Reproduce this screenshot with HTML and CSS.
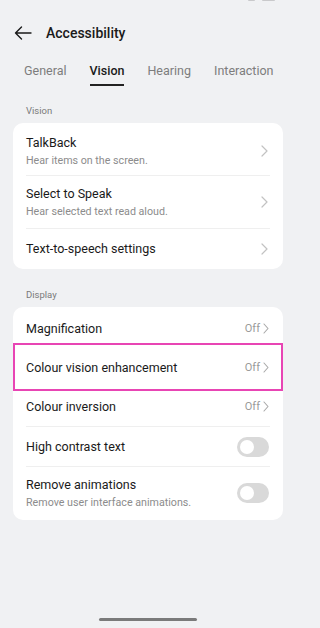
FILE: index.html
```html
<!DOCTYPE html>
<html>
<head>
<meta charset="utf-8">
<link rel="stylesheet" href="styles.css">
</head>
<body>
<div class="screen">
  <div class="status"><span class="s1"></span><span class="s2"></span></div>
  <div class="header">
    <svg class="back" width="18" height="14" viewBox="0 0 18 14"><path d="M17 7H1.5M7.5 1L1.5 7l6 6" fill="none" stroke="#1a1a1a" stroke-width="1.4" stroke-linecap="round" stroke-linejoin="round"/></svg>
    <span class="title">Accessibility</span>
  </div>
  <div class="tabs">
    <div class="tab">General</div>
    <div class="tab active">Vision</div>
    <div class="tab">Hearing</div>
    <div class="tab">Interaction</div>
  </div>

  <div class="section-label first">Vision</div>
  <div class="card">
    <div class="row tall first-row">
      <div class="text"><div class="name">TalkBack</div><div class="sub">Hear items on the screen.</div></div>
      <svg class="chev big" width="7" height="12" viewBox="0 0 7 12"><path d="M1 1l5 5-5 5" fill="none" stroke="#c2c2c2" stroke-width="1.2" stroke-linecap="round" stroke-linejoin="round"/></svg>
    </div>
    <div class="divider"></div>
    <div class="row tall">
      <div class="text"><div class="name">Select to Speak</div><div class="sub">Hear selected text read aloud.</div></div>
      <svg class="chev big" width="7" height="12" viewBox="0 0 7 12"><path d="M1 1l5 5-5 5" fill="none" stroke="#c2c2c2" stroke-width="1.2" stroke-linecap="round" stroke-linejoin="round"/></svg>
    </div>
    <div class="divider"></div>
    <div class="row short">
      <div class="text"><div class="name">Text-to-speech settings</div></div>
      <svg class="chev big" width="7" height="12" viewBox="0 0 7 12"><path d="M1 1l5 5-5 5" fill="none" stroke="#c2c2c2" stroke-width="1.2" stroke-linecap="round" stroke-linejoin="round"/></svg>
    </div>
  </div>

  <div class="section-label second">Display</div>
  <div class="card padded">
    <div class="row mid">
      <div class="text"><div class="name">Magnification</div></div>
      <div class="value">Off<svg class="chev" width="6" height="11" viewBox="0 0 6 11"><path d="M1 1l4 4.5L1 10" fill="none" stroke="#a8a8a8" stroke-width="1.1" stroke-linecap="round" stroke-linejoin="round"/></svg></div>
    </div>
    <div class="row mid highlight">
      <div class="text"><div class="name">Colour vision enhancement</div></div>
      <div class="value">Off<svg class="chev" width="6" height="11" viewBox="0 0 6 11"><path d="M1 1l4 4.5L1 10" fill="none" stroke="#a8a8a8" stroke-width="1.1" stroke-linecap="round" stroke-linejoin="round"/></svg></div>
    </div>
    <div class="row mid">
      <div class="text"><div class="name">Colour inversion</div></div>
      <div class="value">Off<svg class="chev" width="6" height="11" viewBox="0 0 6 11"><path d="M1 1l4 4.5L1 10" fill="none" stroke="#a8a8a8" stroke-width="1.1" stroke-linecap="round" stroke-linejoin="round"/></svg></div>
    </div>
    <div class="divider"></div>
    <div class="row mid">
      <div class="text"><div class="name">High contrast text</div></div>
      <div class="toggle"><span class="knob"></span></div>
    </div>
    <div class="divider"></div>
    <div class="row tall">
      <div class="text"><div class="name">Remove animations</div><div class="sub">Remove user interface animations.</div></div>
      <div class="toggle"><span class="knob"></span></div>
    </div>
  </div>

  <div class="spacer"></div>
  <div class="home"></div>
</div>
</body>
</html>
```

FILE: styles.css
```css
* { box-sizing: border-box; }
html, body { margin: 0; padding: 0; }
body {
  background: #f0f1f3;
  font-family: Roboto, "Noto Sans", "Liberation Sans", sans-serif;
  color: #1a1a1a;
  overflow: hidden;
}
.screen {
  width: 296px;
  height: 628px;
  display: flex;
  flex-direction: column;
  overflow: hidden;
}
.status {
  height: 2px;
  display: flex;
  justify-content: flex-end;
  gap: 7px;
  padding-right: 21px;
}
.status span { height: 1px; background: #c9c9cb; border-radius: 0 0 1px 1px; }
.status .s1 { width: 7px; }
.status .s2 { width: 13px; }
.header {
  margin-top: 18px;
  height: 26px;
  display: flex;
  align-items: center;
  padding-left: 14px;
}
.back { margin-right: 14px; }
.title { font-size: 14px; font-weight: 500; }
.tabs {
  margin-top: 15px;
  display: flex;
  gap: 23px;
  padding-left: 24px;
}
.tab {
  font-size: 12.5px;
  color: #7d7d7d;
  height: 25px;
  line-height: 16px;
  padding-top: 2px;
  border-bottom: 2px solid transparent;
  white-space: nowrap;
}
.tab.active {
  color: #1a1a1a;
  font-weight: 500;
  border-bottom-color: #222;
}
.section-label {
  font-size: 9.5px;
  color: #7a7a7a;
  padding-left: 26px;
  line-height: 12px;
}
.section-label.first { margin-top: 19px; margin-bottom: 6px; }
.section-label.second { margin-top: 20px; margin-bottom: 6px; }
.card {
  margin: 0 13px;
  background: #fff;
  border-radius: 10px;
}
.card.padded { padding: 2px 0 1px; }
.row {
  display: flex;
  align-items: center;
  justify-content: space-between;
  padding: 0 14px 0 13px;
}
.row.tall { height: 52px; }
.row.first-row { padding-top: 4px; }
.row.short { height: 40px; }
.row.mid { height: 39px; }
.name { font-size: 12.5px; line-height: 16px; }
.sub { font-size: 10.7px; color: #8c8c8c; line-height: 13px; margin-top: 3px; }
.divider { height: 1px; background: #efefef; margin: 0 13px; }
.chev { display: block; }
.chev.big { margin-right: 1px; }
.value {
  display: flex;
  align-items: center;
  gap: 3px;
  font-size: 11px;
  color: #9a9a9a;
}
.highlight { position: relative; }
.highlight::after {
  content: "";
  position: absolute;
  left: 0; right: 0; top: -5px; bottom: -4px;
  border: 2px solid #e845b4;
}
.toggle {
  width: 32px;
  height: 20px;
  border-radius: 10px;
  background: #d9d9d9;
  padding: 3px;
  display: flex;
  align-items: center;
}
.knob {
  width: 14px; height: 14px;
  border-radius: 50%;
  background: #fff;
}
.spacer { flex: 1; }
.home {
  align-self: flex-start;
  margin-left: 99px;
  width: 98px;
  height: 3px;
  border-radius: 2px;
  background: #7a7a7a;
  margin-bottom: 7px;
}
```
